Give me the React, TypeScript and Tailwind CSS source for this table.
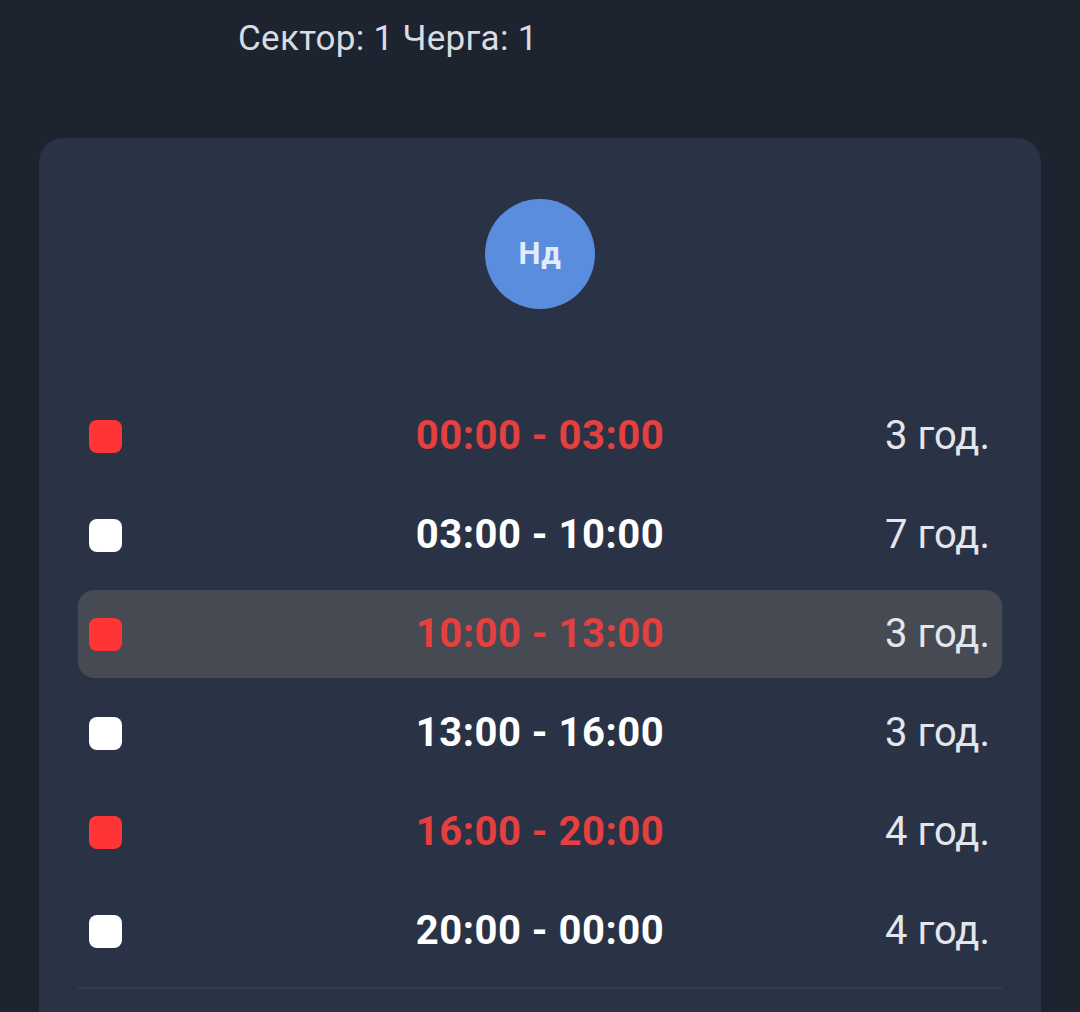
const rows = [
  { time: "00:00 - 03:00", dur: "3 год.", off: true },
  { time: "03:00 - 10:00", dur: "7 год.", off: false },
  { time: "10:00 - 13:00", dur: "3 год.", off: true, current: true },
  { time: "13:00 - 16:00", dur: "3 год.", off: false },
  { time: "16:00 - 20:00", dur: "4 год.", off: true },
  { time: "20:00 - 00:00", dur: "4 год.", off: false },
];

export default function App() {
  return (
    <div className="min-h-[1012px] bg-[#1e2330] font-['Roboto',sans-serif] overflow-hidden">
      <div className="h-[80px] pl-[238px] pt-[17px] text-[35px] leading-[44px] text-[#d8dce3] tracking-[0.3px]">
        Сектор: 1 Черга: 1
      </div>
      <div className="mx-[39px] mt-[58px] rounded-[24px] bg-[#2a3245] px-[39px] pt-[61px]">
        <div className="flex justify-center">
          <div className="flex h-[110px] w-[110px] items-center justify-center rounded-full bg-[#5b8ddf] text-[31px] font-bold tracking-[0.5px] text-[#e3ecfb]">
            Нд
          </div>
        </div>
        <div className="mt-[83px] flex flex-col gap-[11px]">
          {rows.map((r) => (
            <div
              key={r.time}
              className={`relative flex h-[88px] items-center rounded-[16px] pl-[11px] pr-[12px] ${r.current ? "bg-[#464a52]" : ""}`}
            >
              <div className={`h-[33px] w-[33px] rounded-[8px] ${r.off ? "bg-[#ff3535]" : "bg-white"}`} />
              <div
                className={`absolute left-0 right-0 text-center text-[40px] font-bold tracking-[0.5px] ${r.off ? "text-[#e4403f]" : "text-white"}`}
              >
                {r.time}
              </div>
              <div className="ml-auto text-[40px] text-[#e3e6ec]">{r.dur}</div>
            </div>
          ))}
        </div>
        <div className="mt-[12px] h-[2px] bg-[#343c4f]" />
        <div className="h-[60px]" />
      </div>
    </div>
  );
}
